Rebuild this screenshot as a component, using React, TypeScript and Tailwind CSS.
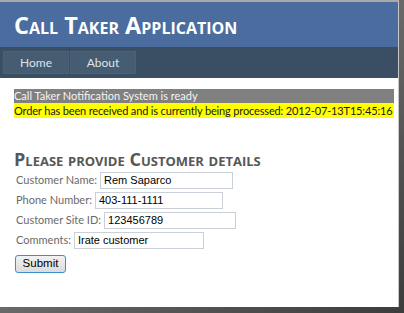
import React from "react";

const fields = [
    {label: "Customer Name:", value: "Rem Saparco", w: "w-[133px]"},
    {label: "Phone Number:", value: "403-111-1111", w: "w-[128px]"},
    {label: "Customer Site ID:", value: "123456789", w: "w-[132px]"},
    {label: "Comments:", value: "Irate customer", w: "w-[130px]"},
];

const App = () => {
    return (
        <div className="w-[404px] h-[313px] bg-gradient-to-br from-[#9a9a9a] to-[#3c3c3c] overflow-hidden">
            <div className="w-[399px] h-[307px] bg-white border-t-2 border-[#a9a9a9] border-r border-r-[#c8c8c8] flex flex-col font-['Lato',sans-serif]">
                {/* Header */}
                <div className="h-[45px] bg-[#4b6c9e] flex items-center px-[14px]">
                    <h1 className="text-white font-bold text-[23.5px] leading-none [font-variant:small-caps] font-['Open_Sans',sans-serif] pt-[2px]">
                        Call Taker Application
                    </h1>
                </div>

                {/* Nav */}
                <div className="h-[31px] bg-[#3a4f63] flex items-center pl-[3px] gap-px">
                    <a className="w-[66px] h-[23px] bg-[#465c71] border border-[#4b6079] text-[#dde4ec] text-[12px] flex items-center justify-center">
                        Home
                    </a>
                    <a className="w-[66px] h-[23px] bg-[#465c71] border border-[#4b6079] text-[#dde4ec] text-[12px] flex items-center justify-center">
                        About
                    </a>
                </div>

                {/* Body */}
                <div className="pl-[14px] pr-[4px] pt-[11px]">
                    <div className="bg-[#808080] text-[#f4f4f4] text-[11px] leading-[14px] h-[14px] whitespace-nowrap">
                        Call Taker Notification System is ready
                    </div>
                    <div className="bg-[#ffff00] text-[#1a1a1a] text-[11px] leading-[15px] h-[15px] whitespace-nowrap tracking-[-0.15px]">
                        Order has been received and is currently being processed: 2012-07-13T15:45:16
                    </div>

                    <h2 className="mt-[32px] text-[#575757] text-[18px] font-bold leading-[18px] [font-variant:small-caps] whitespace-nowrap font-['Open_Sans',sans-serif]">
                        Please provide Customer details
                    </h2>

                    <div className="mt-[4px] flex flex-col gap-[3px] pl-[2px]">
                        {fields.map((f) => (
                            <div key={f.label} className="flex items-center gap-[3px] h-[17px]">
                                <span className="text-[#6a6a6a] text-[11px] whitespace-nowrap">{f.label}</span>
                                <div className={`${f.w} h-[17px] border border-[#c9d0d8] bg-white px-[3px] flex items-center font-['Liberation_Sans',Arial,sans-serif] text-[11px] text-black`}>
                                    {f.value}
                                </div>
                            </div>
                        ))}
                    </div>

                    <button className="mt-[4px] ml-[1px] w-[51px] h-[18px] rounded-[3px] border border-[#3c8fcf] bg-gradient-to-b from-[#f2f2f2] to-[#dcdcdc] font-['Liberation_Sans',Arial,sans-serif] text-[11.5px] text-black leading-none">
                        Submit
                    </button>
                </div>
            </div>
        </div>
    );
};

export default App;
